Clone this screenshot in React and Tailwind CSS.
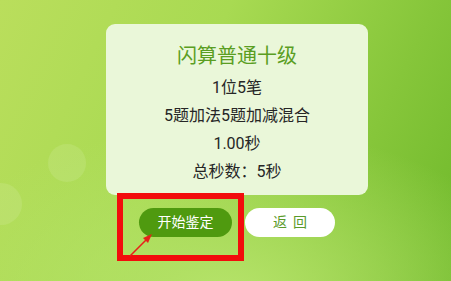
export default function App() {
  return (
    <div className="relative w-[451px] h-[281px] overflow-hidden bg-[radial-gradient(ellipse_70%_60%_at_50%_105%,#b6e36a_0%,rgba(182,227,106,0)_100%),linear-gradient(115deg,#bade5c_0%,#a8da52_40%,#86c63a_75%,#6fb92b_100%)]" style={{ fontFamily: 'Roboto, "Noto Sans CJK SC", sans-serif' }}>
      <div className="absolute left-[48px] top-[144px] w-[38px] h-[38px] rounded-full bg-white/10" />
      <div className="absolute left-[-20px] top-[183px] w-[42px] h-[42px] rounded-full bg-white/10" />
      <div className="relative flex flex-col">
        <div className="ml-[106px] mt-[24px] w-[262px] h-[171px] rounded-[9px] bg-[#eaf7d9] flex flex-col items-center pt-[16px]">
          <div className="text-[20px] leading-[32px] text-[#5a9e22]">闪算普通十级</div>
          <div className="mt-[2px] flex flex-col items-center text-[16px] leading-[28px] text-[#262626]">
            <div>1位5笔</div>
            <div>5题加法5题加减混合</div>
            <div>1.00秒</div>
            <div>总秒数：5秒</div>
          </div>
        </div>
        <div className="ml-[139px] mt-[13px] flex gap-[13px]">
          <div className="w-[93px] h-[29px] rounded-full bg-[#4f9a0f] text-white text-[14px] flex items-center justify-center">开始鉴定</div>
          <div className="w-[90px] h-[29px] rounded-full bg-white text-[#5a9a2a] text-[14px] flex items-center justify-center tracking-[6px] pl-[6px]">返回</div>
        </div>
      </div>
      <div className="absolute left-[117px] top-[193px] w-[127px] h-[68px] border-[6px] border-[#f20c0c]" />
      <svg className="absolute left-0 top-0" width="451" height="281">
        <line x1="130" y1="256" x2="147" y2="239" stroke="#e8201a" strokeWidth="1.6" />
        <polygon points="152,234 143,238 148,243" fill="#e8201a" />
      </svg>
    </div>
  );
}
